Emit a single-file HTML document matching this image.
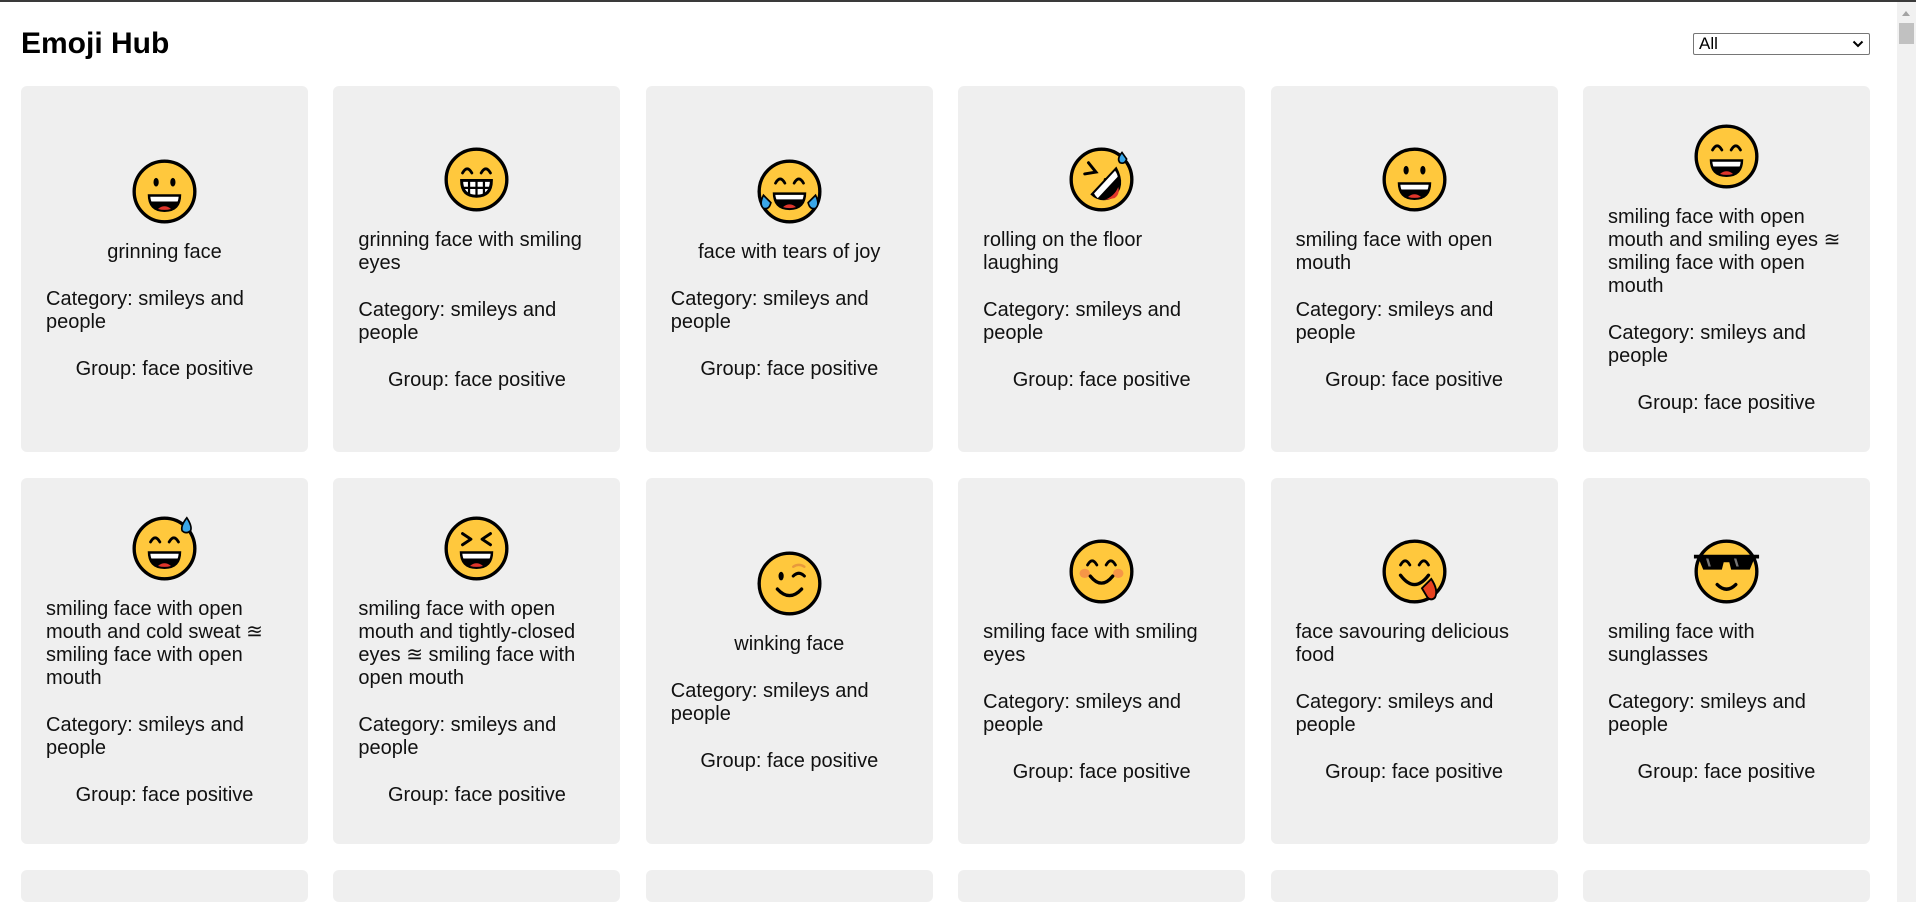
<!DOCTYPE html>
<html><head><meta charset="utf-8"><style>
*{box-sizing:border-box}
html,body{margin:0;padding:0;width:1916px;height:902px;overflow:hidden;background:#fff;font-family:"Liberation Sans",Arial,sans-serif;color:#111}
.wrap{position:relative;width:1916px;height:902px;overflow:hidden}
.topbar{position:absolute;left:0;top:0;width:1916px;height:2px;background:#3a3a3a}
h1{position:absolute;left:21px;top:26px;margin:0;font-size:30px;font-weight:bold;line-height:35px;color:#000}
.sel{position:absolute;left:1693px;top:33px;width:177px;height:22px;border:1px solid #767676;border-radius:2px;font-size:17px;line-height:20px;padding-left:5px;color:#000;background:#fff}
.sel svg{position:absolute;right:5px;top:6px}
.grid{position:absolute;left:21px;top:86px;display:grid;grid-template-columns:repeat(6,287px);column-gap:25.4px;row-gap:26px}
.card{height:366px;background:#efefef;border-radius:6px;padding:0 25px;display:flex;flex-direction:column;align-items:center;justify-content:center;font-size:20px;line-height:23px}
.card.s{height:32px}
.card svg.e{width:67px;height:67px;display:block;margin-bottom:16px;flex:none}
.card p{margin:0}
.card p.c{margin:24px 0}
.sb{position:absolute;left:1897px;top:2px;width:19px;height:900px;background:#f1f1f1}
.sb .th{position:absolute;left:2px;top:21px;width:15px;height:21px;background:#c1c1c1}
.sb .ar{position:absolute;left:5px;top:9px;width:0;height:0;border-left:4.5px solid transparent;border-right:4.5px solid transparent;border-bottom:5px solid #a3a3a3}
</style></head><body><div class="wrap">
<div class="topbar"></div>
<h1>Emoji Hub</h1>
<div class="sel">All<svg width="12" height="8" viewBox="0 0 12 8"><path d="M1.5 1.5L6 6L10.5 1.5" fill="none" stroke="#000" stroke-width="2"/></svg></div>
<div class="grid">

<div class="card"><svg class="e" viewBox="0 0 36 36"><circle cx="18" cy="18" r="16.3" fill="#FFC83D" stroke="#000" stroke-width="1.8"/><ellipse cx="13.5" cy="13" rx="1.4" ry="2.3"/><ellipse cx="22.5" cy="13" rx="1.4" ry="2.3"/><path d="M9 19.5H27Q27 29 18 29Q9 29 9 19.5Z"/><path d="M10.4 20.8H25.6Q25.4 22.7 25 23.4H11Q10.6 22.7 10.4 20.8Z" fill="#fff"/><path d="M14.5 27.4Q18 24.5 21.5 27.4Q18 28.4 14.5 27.4Z" fill="#e0352b"/></svg><p>grinning face</p><p class="c">Category: smileys and people</p><p>Group: face positive</p></div>

<div class="card"><svg class="e" viewBox="0 0 36 36"><circle cx="18" cy="18" r="16.3" fill="#FFC83D" stroke="#000" stroke-width="1.8"/><path d="M10.5 14.5Q13 10 15.5 14.5M20.5 14.5Q23 10 25.5 14.5" fill="none" stroke="#000" stroke-width="1.5" stroke-linecap="round"/><path d="M10 18.5H26Q26 27 18 27Q10 27 10 18.5Z" fill="#fff" stroke="#000" stroke-width="1.6"/><path d="M10.5 22.5H25.5M14 18.5V26.3M18 18.5V27M22 18.5V26.3" stroke="#000" stroke-width="1.2"/></svg><p>grinning face with smiling eyes</p><p class="c">Category: smileys and people</p><p>Group: face positive</p></div>

<div class="card"><svg class="e" viewBox="0 0 36 36"><circle cx="18" cy="18" r="16.3" fill="#FFC83D" stroke="#000" stroke-width="1.8"/><path d="M10.5 13.5Q13 9 15.5 13.5M20.5 13.5Q23 9 25.5 13.5" fill="none" stroke="#000" stroke-width="1.5" stroke-linecap="round"/><path d="M9 18.5H27Q27 28 18 28Q9 28 9 18.5Z"/><path d="M10.4 19.8H25.6Q25.4 21.5 25 22.2H11Q10.6 21.5 10.4 19.8Z" fill="#fff"/><path d="M14.5 26.4Q18 23.5 21.5 26.4Q18 27.4 14.5 26.4Z" fill="#e0352b"/><path d="M4 20Q1.5 25 4 27Q7 28 8 24Z M32 20Q34.5 25 32 27Q29 28 28 24Z" fill="#3aa7e8" stroke="#000" stroke-width="0.9"/></svg><p>face with tears of joy</p><p class="c">Category: smileys and people</p><p>Group: face positive</p></div>

<div class="card"><svg class="e" viewBox="0 0 36 36"><circle cx="18" cy="18" r="16.3" fill="#FFC83D" stroke="#000" stroke-width="1.8"/><path d="M11 9L15 14L9 15M20 18L22 24L27 17" fill="none" stroke="#000" stroke-width="1.6" stroke-linecap="round"/><path d="M12 26L26 11Q32 22 24 28Q17 31 12 26Z"/><path d="M14 25.5L25.3 13.3Q26.5 15 26.7 16.5L16 28Q14.8 27 14 25.5Z" fill="#fff"/><path d="M19.5 29Q25 27 27 22Q28 26 25 28Z" fill="#e0352b"/><path d="M29 3.5Q26 7 28 9Q30.5 10 31.5 7Z" fill="#3aa7e8" stroke="#000" stroke-width="0.9"/></svg><p>rolling on the floor laughing</p><p class="c">Category: smileys and people</p><p>Group: face positive</p></div>

<div class="card"><svg class="e" viewBox="0 0 36 36"><circle cx="18" cy="18" r="16.3" fill="#FFC83D" stroke="#000" stroke-width="1.8"/><ellipse cx="13.5" cy="13" rx="1.4" ry="2.3"/><ellipse cx="22.5" cy="13" rx="1.4" ry="2.3"/><path d="M9 19.5H27Q27 29 18 29Q9 29 9 19.5Z"/><path d="M10.4 20.8H25.6Q25.4 22.7 25 23.4H11Q10.6 22.7 10.4 20.8Z" fill="#fff"/><path d="M14.5 27.4Q18 24.5 21.5 27.4Q18 28.4 14.5 27.4Z" fill="#e0352b"/></svg><p>smiling face with open mouth</p><p class="c">Category: smileys and people</p><p>Group: face positive</p></div>

<div class="card"><svg class="e" viewBox="0 0 36 36"><circle cx="18" cy="18" r="16.3" fill="#FFC83D" stroke="#000" stroke-width="1.8"/><path d="M10.5 14.5Q13 10 15.5 14.5M20.5 14.5Q23 10 25.5 14.5" fill="none" stroke="#000" stroke-width="1.5" stroke-linecap="round"/><path d="M9 19.5H27Q27 29 18 29Q9 29 9 19.5Z"/><path d="M10.4 20.8H25.6Q25.4 22.7 25 23.4H11Q10.6 22.7 10.4 20.8Z" fill="#fff"/><path d="M14.5 27.4Q18 24.5 21.5 27.4Q18 28.4 14.5 27.4Z" fill="#e0352b"/></svg><p>smiling face with open mouth and smiling eyes ≊ smiling face with open mouth</p><p class="c">Category: smileys and people</p><p>Group: face positive</p></div>

<div class="card"><svg class="e" viewBox="0 0 36 36"><circle cx="18" cy="18" r="16.3" fill="#FFC83D" stroke="#000" stroke-width="1.8"/><path d="M10.5 14.5Q13 10 15.5 14.5M20.5 14.5Q23 10 25.5 14.5" fill="none" stroke="#000" stroke-width="1.5" stroke-linecap="round"/><path d="M9 19.5H27Q27 29 18 29Q9 29 9 19.5Z"/><path d="M10.4 20.8H25.6Q25.4 22.7 25 23.4H11Q10.6 22.7 10.4 20.8Z" fill="#fff"/><path d="M14.5 27.4Q18 24.5 21.5 27.4Q18 28.4 14.5 27.4Z" fill="#e0352b"/><path d="M30 1.5Q26.5 6 27.5 8.5Q29.5 10.5 32 8.5Q33 6 30 1.5Z" fill="#3aa7e8" stroke="#000" stroke-width="0.9"/></svg><p>smiling face with open mouth and cold sweat ≊ smiling face with open mouth</p><p class="c">Category: smileys and people</p><p>Group: face positive</p></div>

<div class="card"><svg class="e" viewBox="0 0 36 36"><circle cx="18" cy="18" r="16.3" fill="#FFC83D" stroke="#000" stroke-width="1.8"/><path d="M10.5 10L15 13L10.5 16M25.5 10L21 13L25.5 16" fill="none" stroke="#000" stroke-width="1.6" stroke-linecap="round" stroke-linejoin="round"/><path d="M9 19.5H27Q27 29 18 29Q9 29 9 19.5Z"/><path d="M10.4 20.8H25.6Q25.4 22.7 25 23.4H11Q10.6 22.7 10.4 20.8Z" fill="#fff"/><path d="M14.5 27.4Q18 24.5 21.5 27.4Q18 28.4 14.5 27.4Z" fill="#e0352b"/></svg><p>smiling face with open mouth and tightly-closed eyes ≊ smiling face with open mouth</p><p class="c">Category: smileys and people</p><p>Group: face positive</p></div>

<div class="card"><svg class="e" viewBox="0 0 36 36"><circle cx="18" cy="18" r="16.3" fill="#FFC83D" stroke="#000" stroke-width="1.8"/><ellipse cx="13.5" cy="14" rx="1.4" ry="2.3"/><path d="M20 14Q23 11 26 14" fill="none" stroke="#000" stroke-width="1.6" stroke-linecap="round"/><path d="M20 9Q23 7 26 9" fill="none" stroke="#e89a3c" stroke-width="1.3" stroke-linecap="round"/><path d="M11.5 21Q18 28 24.5 21" fill="none" stroke="#000" stroke-width="1.8" stroke-linecap="round"/></svg><p>winking face</p><p class="c">Category: smileys and people</p><p>Group: face positive</p></div>

<div class="card"><svg class="e" viewBox="0 0 36 36"><circle cx="18" cy="18" r="16.3" fill="#FFC83D" stroke="#000" stroke-width="1.8"/><ellipse cx="9" cy="19" rx="2.8" ry="2.5" fill="#f4894a" opacity=".8"/><ellipse cx="27" cy="19" rx="2.8" ry="2.5" fill="#f4894a" opacity=".8"/><path d="M10.5 14.5Q13 10 15.5 14.5M20.5 14.5Q23 10 25.5 14.5" fill="none" stroke="#000" stroke-width="1.5" stroke-linecap="round"/><path d="M12 20.5Q18 28 24 20.5" fill="none" stroke="#000" stroke-width="1.8" stroke-linecap="round"/></svg><p>smiling face with smiling eyes</p><p class="c">Category: smileys and people</p><p>Group: face positive</p></div>

<div class="card"><svg class="e" viewBox="0 0 36 36"><circle cx="18" cy="18" r="16.3" fill="#FFC83D" stroke="#000" stroke-width="1.8"/><path d="M10.5 14.5Q13 10 15.5 14.5M20.5 14.5Q23 10 25.5 14.5" fill="none" stroke="#000" stroke-width="1.5" stroke-linecap="round"/><path d="M22 27L27 22Q31 28 29 32Q27 34 25 32Z" fill="#e8421f" stroke="#000" stroke-width="1"/><path d="M10.5 20Q18 30 25.5 20" fill="none" stroke="#000" stroke-width="1.8" stroke-linecap="round"/></svg><p>face savouring delicious food</p><p class="c">Category: smileys and people</p><p>Group: face positive</p></div>

<div class="card"><svg class="e" viewBox="0 0 36 36" style="overflow:visible"><circle cx="18" cy="18" r="16.3" fill="#FFC83D" stroke="#000" stroke-width="1.8"/><path d="M0.5 9H35.5V11H33L30.5 17H20.5L19.5 13H16.5L15.5 17H5.5L3 11H0.5Z"/><path d="M7 11L8.3 15.3H9.6L8.3 11ZM22 11L23.3 15.3H24.6L23.3 11Z" fill="#777"/><path d="M13 25Q18 30 23 25" fill="none" stroke="#000" stroke-width="1.8" stroke-linecap="round"/></svg><p>smiling face with sunglasses</p><p class="c">Category: smileys and people</p><p>Group: face positive</p></div>

<div class="card s"></div><div class="card s"></div><div class="card s"></div><div class="card s"></div><div class="card s"></div><div class="card s"></div>
</div>
<div class="sb"><div class="ar"></div><div class="th"></div></div>
</div></body></html>
